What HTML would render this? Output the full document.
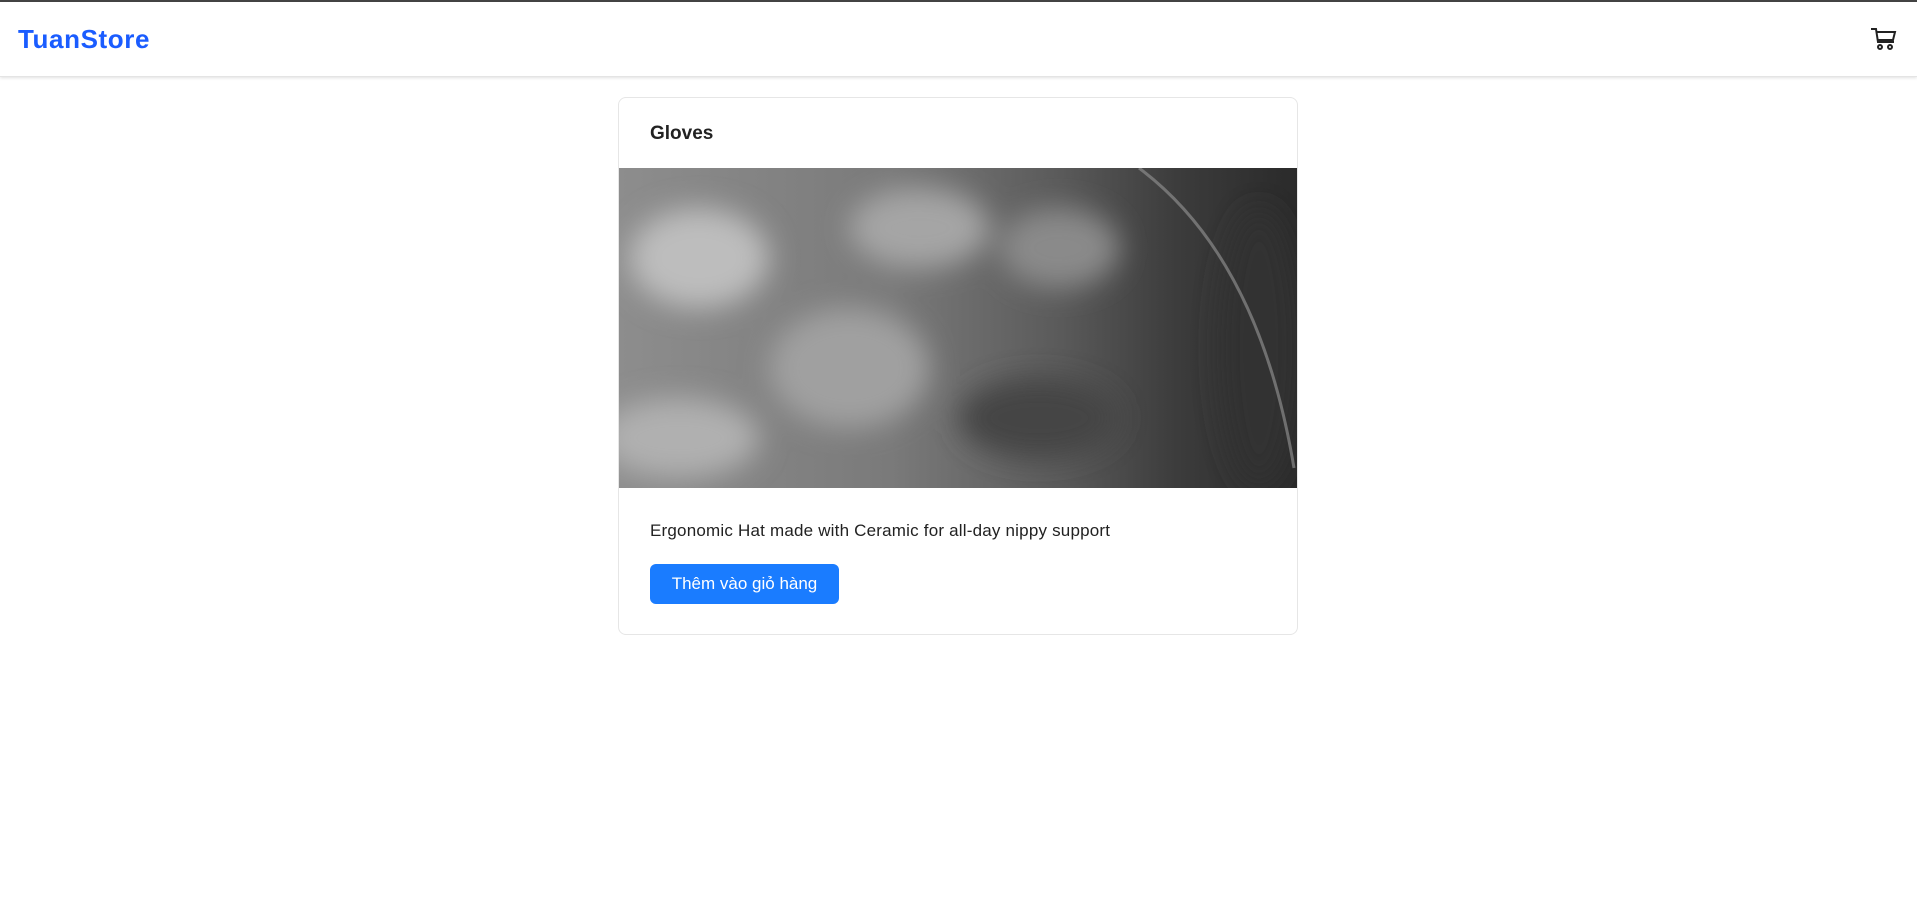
<!DOCTYPE html>
<html><head><meta charset="utf-8">
<style>
*{box-sizing:border-box;margin:0;padding:0}
html,body{width:1917px;height:911px;background:#fff;font-family:"Liberation Sans",sans-serif;overflow:hidden}
.top{position:absolute;left:0;top:0;width:1917px;height:2px;background:#444}
.nav{position:absolute;left:0;top:2px;width:1917px;height:75px;background:#fff;box-shadow:0 1px 3px rgba(0,0,0,.12);border-bottom:1px solid #e4e4e4}
.brand{position:absolute;left:18px;top:22px;font-size:26px;font-weight:bold;color:#1a5cff;letter-spacing:0.6px}
.cart{position:absolute;left:1869px;top:22px}
.card{position:absolute;left:618px;top:97px;width:680px;height:538px;border:1px solid #e6e6e6;border-radius:8px;overflow:hidden}
.title{position:absolute;left:31px;top:25px;font-size:19px;font-weight:bold;color:#222}
.img{position:absolute;left:0;top:70px;width:680px;height:320px}
.desc{position:absolute;left:31px;top:423px;font-size:17px;color:#222;letter-spacing:0.2px}
.btn{position:absolute;left:31px;top:466px;width:189px;height:40px;background:#1a7cff;border-radius:6px;color:#fff;font-size:17px;text-align:center;line-height:40px}
</style></head><body>
<div class="top"></div>
<div class="nav"><div class="brand">TuanStore</div>
<svg class="cart" width="30" height="30" viewBox="0 0 30 30" fill="none" stroke="#222" stroke-width="2"><path d="M2 5h5l2 13h16M8 8h18l-2 8H9.5"/><circle cx="11" cy="23" r="2"/><circle cx="21" cy="23" r="2"/></svg>
</div>
<div class="card">
<div class="title">Gloves</div>
<svg class="img" viewBox="0 0 680 320" preserveAspectRatio="none">
<defs>
<linearGradient id="g" x1="0" y1="0" x2="1" y2="0"><stop offset="0" stop-color="#8d8d8d"/><stop offset="0.4" stop-color="#7a7a7a"/><stop offset="0.65" stop-color="#5a5a5a"/><stop offset="0.82" stop-color="#3c3c3c"/><stop offset="1" stop-color="#2a2a2a"/></linearGradient>
<filter id="b"><feGaussianBlur stdDeviation="14"/></filter>
</defs>
<rect width="680" height="320" fill="url(#g)"/>
<g filter="url(#b)">
<ellipse cx="80" cy="90" rx="70" ry="50" fill="#bdbdbd"/>
<ellipse cx="60" cy="270" rx="80" ry="40" fill="#b0b0b0"/>
<ellipse cx="230" cy="200" rx="80" ry="60" fill="#a0a0a0"/>
<ellipse cx="300" cy="60" rx="70" ry="40" fill="#a5a5a5"/>
<ellipse cx="440" cy="80" rx="60" ry="40" fill="#8a8a8a"/>
<ellipse cx="420" cy="250" rx="80" ry="40" fill="#444"/>
<ellipse cx="640" cy="180" rx="40" ry="140" fill="#333"/>
</g>
<path d="M520 0 Q640 90 675 300" stroke="#8a8a8a" stroke-width="3" fill="none" opacity=".7"/>
</svg>
<div class="desc">Ergonomic Hat made with Ceramic for all-day nippy support</div>
<div class="btn">Thêm vào giỏ hàng</div>
</div>
</body></html>
